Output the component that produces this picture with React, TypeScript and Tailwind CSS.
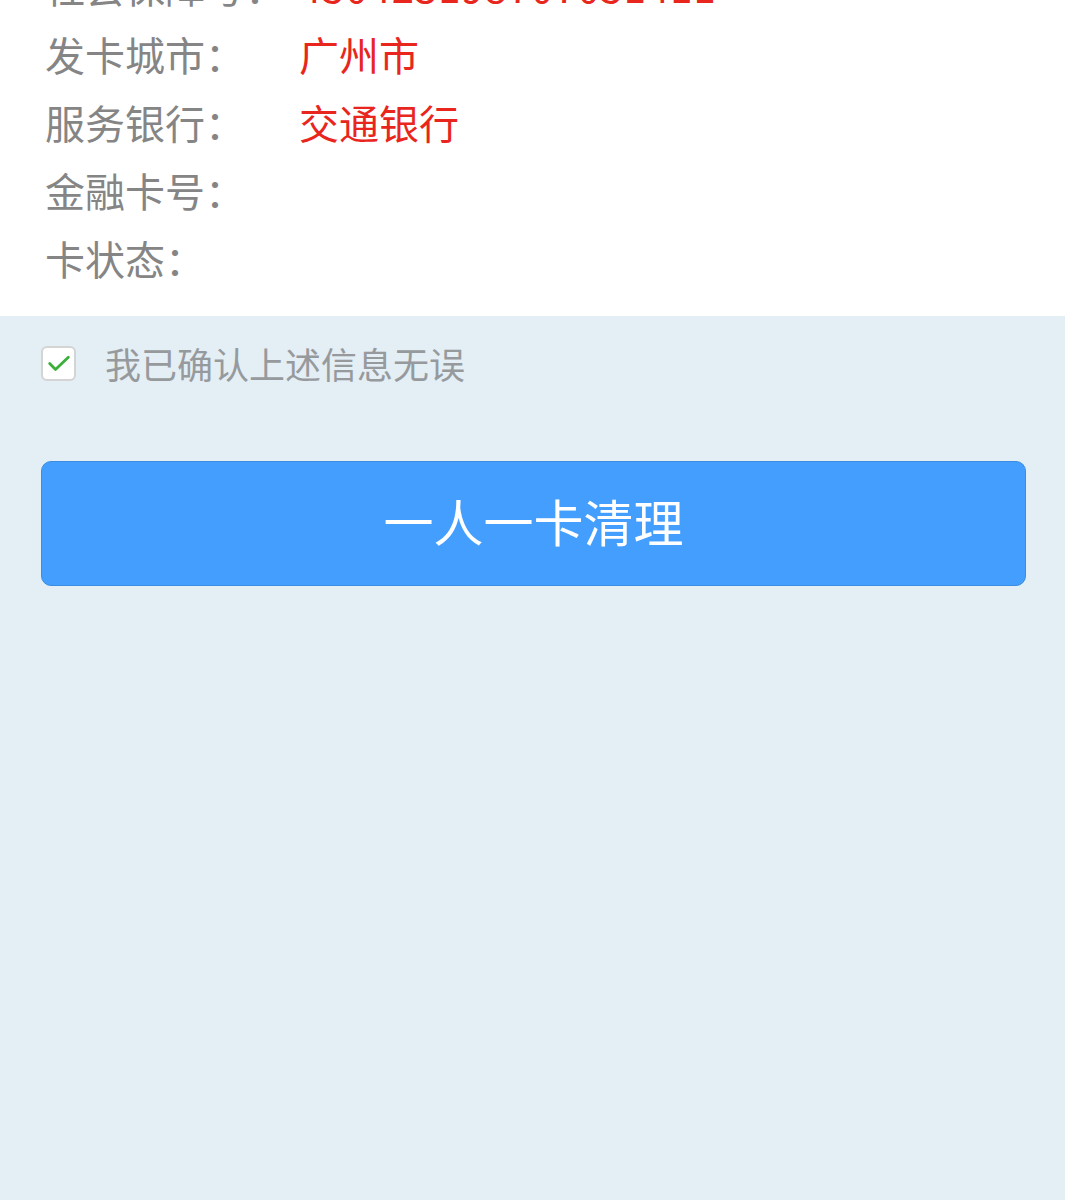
const rows = [
  { label: '社会保障号：', value: '450423198707051411' },
  { label: '发卡城市：', value: '广州市' },
  { label: '服务银行：', value: '交通银行' },
  { label: '金融卡号：', value: '' },
  { label: '卡状态：', value: '' },
];

export default function App() {
  return (
    <div
      className="min-h-[1200px] overflow-hidden bg-[#e3eef5]"
      style={{ fontFamily: '"Noto Sans CJK SC", "Noto Sans", sans-serif' }}
    >
      <div className="-mt-[48px] bg-white pb-[24px] pl-[45px]">
        {rows.map((row, i) => (
          <div key={row.label} className="flex h-[68px] items-center text-[40px] leading-none">
            <span className="w-[254px] shrink-0 whitespace-nowrap text-[#858585]">{row.label}</span>
            <span className={`whitespace-nowrap text-[#e8261d] ${i === 0 ? 'tracking-[1px]' : ''}`}>{row.value}</span>
          </div>
        ))}
      </div>

      <div className="pl-[41px] pr-[39px]">
        <label className="flex items-center pt-[29px]">
          <span className="flex h-[35px] w-[35px] items-center justify-center rounded-[6px] border-2 border-[#d4d4d4] bg-white">
            <svg viewBox="0 0 24 24" className="h-[28px] w-[28px]" fill="none">
              <path d="M4 12.5l5 5L20 7" stroke="#3ab03a" strokeWidth="2.4" strokeLinecap="round" strokeLinejoin="round" />
            </svg>
          </span>
          <span className="ml-[29px] text-[36px] leading-none text-[#979a9d]">我已确认上述信息无误</span>
        </label>

        <button
          type="button"
          className="mt-[80px] flex h-[125px] w-full items-center justify-center rounded-[10px] border border-[#3a8de0] bg-[#439efe] pb-[8px] text-[50px] leading-none text-white"
        >
          一人一卡清理
        </button>
      </div>
    </div>
  );
}
